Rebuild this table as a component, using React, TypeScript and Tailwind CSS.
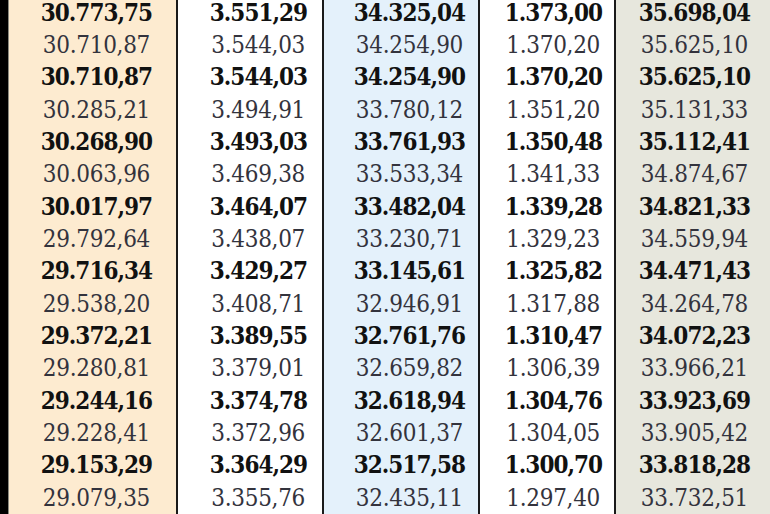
const rows: string[][] = [
  ["30.773,75", "3.551,29", "34.325,04", "1.373,00", "35.698,04"],
  ["30.710,87", "3.544,03", "34.254,90", "1.370,20", "35.625,10"],
  ["30.710,87", "3.544,03", "34.254,90", "1.370,20", "35.625,10"],
  ["30.285,21", "3.494,91", "33.780,12", "1.351,20", "35.131,33"],
  ["30.268,90", "3.493,03", "33.761,93", "1.350,48", "35.112,41"],
  ["30.063,96", "3.469,38", "33.533,34", "1.341,33", "34.874,67"],
  ["30.017,97", "3.464,07", "33.482,04", "1.339,28", "34.821,33"],
  ["29.792,64", "3.438,07", "33.230,71", "1.329,23", "34.559,94"],
  ["29.716,34", "3.429,27", "33.145,61", "1.325,82", "34.471,43"],
  ["29.538,20", "3.408,71", "32.946,91", "1.317,88", "34.264,78"],
  ["29.372,21", "3.389,55", "32.761,76", "1.310,47", "34.072,23"],
  ["29.280,81", "3.379,01", "32.659,82", "1.306,39", "33.966,21"],
  ["29.244,16", "3.374,78", "32.618,94", "1.304,76", "33.923,69"],
  ["29.228,41", "3.372,96", "32.601,37", "1.304,05", "33.905,42"],
  ["29.153,29", "3.364,29", "32.517,58", "1.300,70", "33.818,28"],
  ["29.079,35", "3.355,76", "32.435,11", "1.297,40", "33.732,51"],
];

// per-column look: background, width, right padding, divider
const cols = [
  { bg: "bg-[#fdebd0]", w: "w-[169px]", pr: "pr-[24px]", border: "border-r-2 border-[#1a1a1a]" },
  { bg: "bg-white", w: "w-[146px]", pr: "pr-[15px]", border: "border-r-2 border-[#1a1a1a]" },
  { bg: "bg-[#e4f1fb]", w: "w-[156px]", pr: "pr-[13px]", border: "border-r-2 border-[#1a1a1a]" },
  { bg: "bg-white", w: "w-[136px]", pr: "pr-[12px]", border: "border-r-2 border-[#1a1a1a]" },
  { bg: "bg-[#e7e7dd]", w: "flex-1", pr: "pr-[20px]", border: "" },
];

export default function App() {
  return (
    <div className="flex h-[514px] w-[770px] overflow-hidden bg-white font-['DejaVu_Serif',serif] text-[24px] [font-stretch:condensed]">
      <div className="w-[8px] bg-black" />
      <div className="w-[1px] bg-[#8a8a80]" />
      {cols.map((c, ci) => (
        <div key={ci} className={`flex flex-col ${c.bg} ${c.w} ${c.pr} ${c.border}`}>
          <div className="mt-[-3.5px] flex flex-col">
            {rows.map((r, ri) => {
              const bold = ri % 2 === 0;
              return (
                <div
                  key={ri}
                  className={`flex h-[32.33px] items-center justify-end leading-none ${
                    bold
                      ? "font-bold tracking-[-1px] text-[#111]"
                      : "mr-[2px] font-normal tracking-[-0.3px] text-[#33333d]"
                  }`}
                >
                  {r[ci]}
                </div>
              );
            })}
          </div>
        </div>
      ))}
    </div>
  );
}
